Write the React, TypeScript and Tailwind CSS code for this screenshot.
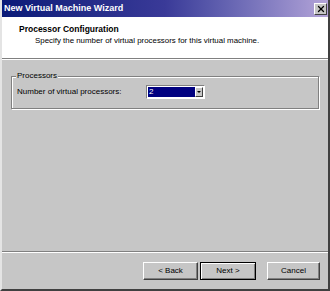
import { X } from "lucide-react"

const font = "font-['Liberation_Sans',Arial,sans-serif]"

function Button({
  label,
  width,
  isDefault,
}: {
  label: string
  width: string
  isDefault?: boolean
}) {
  return (
    <div
      className={`flex h-[18px] items-center justify-center bg-[#c6c6c6] text-[8px] text-black ${width} ${
        isDefault
          ? "border border-black shadow-[inset_1px_1px_0_#fff,inset_-1px_-1px_0_#808080]"
          : "border border-t-white border-l-white border-r-[#404040] border-b-[#404040] shadow-[inset_-1px_-1px_0_#808080]"
      }`}
    >
      {label}
    </div>
  )
}

export default function App() {
  return (
    <div
      className={`flex h-[291px] w-[330px] flex-col overflow-hidden border-r-2 border-b-2 border-l-2 border-r-[#404040] border-b-[#404040] border-l-[#e4e4e4] bg-[#c6c6c6] ${font}`}
    >
      {/* Title bar */}
      <div className="flex h-[17px] shrink-0 items-center justify-between bg-gradient-to-r from-[#0a1a78] via-[#3a3a98] to-[#b4a4d8] pr-[1px] pl-[2px]">
        <span className="text-[9px] font-bold text-white">
          New Virtual Machine Wizard
        </span>
        <div className="flex h-[12px] w-[13px] items-center justify-center border border-t-white border-l-white border-r-[#404040] border-b-[#404040] bg-[#c6c6c6]">
          <X size={10} strokeWidth={3} className="text-black" />
        </div>
      </div>

      {/* Header */}
      <div className="flex h-[42px] shrink-0 flex-col border-b border-b-[#808080] bg-white pt-[7px] pl-[17px] shadow-[0_1px_0_#fff]">
        <span className="text-[8.5px] leading-[11px] font-bold text-black">
          Processor Configuration
        </span>
        <span className="pl-[16px] text-[7.9px] leading-[12px] text-black">
          Specify the number of virtual processors for this virtual machine.
        </span>
      </div>

      {/* Body */}
      <div className="flex flex-1 flex-col px-[9px] pt-[17px]">
        <div className="relative h-[33px] w-[308px] border border-[#808080] shadow-[1px_1px_0_#fff,inset_1px_1px_0_#fff]">
          <span className="absolute -top-[6px] left-[4px] bg-[#c6c6c6] px-[1px] text-[8px] leading-[10px] text-black">
            Processors
          </span>
          <div className="flex items-center pt-[8px] pl-[5px]">
            <span className="w-[129px] text-[8px] text-black">
              Number of virtual processors:
            </span>
            <div className="flex h-[14px] w-[59px] items-center border border-t-[#808080] border-l-[#808080] border-r-white border-b-white bg-white p-[1px]">
              <div className="flex h-full flex-1 items-center bg-[#000080] pl-[1px] text-[8px] text-white">
                2
              </div>
              <div className="flex h-full w-[8px] items-center justify-center border border-t-white border-l-white border-r-[#404040] border-b-[#404040] bg-[#c6c6c6]">
                <div className="h-0 w-0 border-x-[2px] border-t-[2px] border-x-transparent border-t-black" />
              </div>
            </div>
          </div>
        </div>
      </div>

      {/* Footer */}
      <div className="shrink-0 border-t border-t-[#808080] shadow-[inset_0_1px_0_#fff]">
        <div className="flex justify-end pt-[10px] pr-[8px] pb-[9px]">
          <Button label="< Back" width="w-[55px]" />
          <div className="w-[2px]" />
          <Button label="Next >" width="w-[56px]" isDefault />
          <div className="w-[11px]" />
          <Button label="Cancel" width="w-[53px]" />
        </div>
      </div>
    </div>
  )
}
